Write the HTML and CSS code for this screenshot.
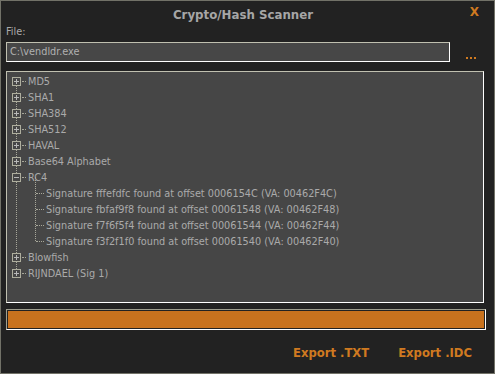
FILE: index.html
```html
<!DOCTYPE html>
<html>
    <head>
        <title>Crypto/Hash Scanner</title>
        <meta charset="UTF-8">
        <link rel="stylesheet" href="styles.css">
    </head>
    <body>
        <div class="window">
            <div class="titlebar">
                <span class="title">Crypto/Hash Scanner</span>
                <span class="close">X</span>
            </div>
            <div class="label">File:</div>
            <div class="filerow">
                <div class="filebox">C:\vendldr.exe</div>
                <div class="browse"><i></i><i></i><i></i></div>
            </div>
            <div class="tree">
                <ul class="root">
                    <li><span class="tog plus"></span><span class="dash"></span>MD5</li>
                    <li><span class="tog plus"></span><span class="dash"></span>SHA1</li>
                    <li><span class="tog plus"></span><span class="dash"></span>SHA384</li>
                    <li><span class="tog plus"></span><span class="dash"></span>SHA512</li>
                    <li><span class="tog plus"></span><span class="dash"></span>HAVAL</li>
                    <li><span class="tog plus"></span><span class="dash"></span>Base64 Alphabet</li>
                    <li><span class="tog"></span><span class="dash"></span>RC4</li>
                    <li class="kids">
                        <ul>
                            <li><span class="dash long"></span>Signature fffefdfc found at offset 0006154C (VA: 00462F4C)</li>
                            <li><span class="dash long"></span>Signature fbfaf9f8 found at offset 00061548 (VA: 00462F48)</li>
                            <li><span class="dash long"></span>Signature f7f6f5f4 found at offset 00061544 (VA: 00462F44)</li>
                            <li><span class="dash long"></span>Signature f3f2f1f0 found at offset 00061540 (VA: 00462F40)</li>
                        </ul>
                    </li>
                    <li><span class="tog plus"></span><span class="dash"></span>Blowfish</li>
                    <li><span class="tog plus"></span><span class="dash"></span>RIJNDAEL (Sig 1)</li>
                </ul>
            </div>
            <div class="progress"><div class="bar"></div></div>
            <div class="actions">
                <span class="action">Export .TXT</span>
                <span class="action">Export .IDC</span>
            </div>
        </div>
    </body>
</html>
```

FILE: styles.css
```css
html,body{margin:0; padding:0; background:#222222;}

.window{
    width:495px; height:374px;
    box-sizing:border-box;
    border:1px solid #727268;
    background:#222222;
    font-family:"DejaVu Sans Condensed", "DejaVu Sans", sans-serif;
    font-size:10.8px;
    color:#aaaaaa;
    padding:0 5px 0 5px;
}

.titlebar{
    position:relative;
    height:24px;
    display:flex;
    justify-content:center;
    align-items:center;
}

.title{
    font-family:"DejaVu Sans", sans-serif;
    font-weight:bold;
    font-size:11.8px;
    color:#a6a6a6;
    margin:3px 9px 0 0;
}

.close{
    position:absolute;
    right:10px; top:4px;
    color:#d07a20;
    font-family:"DejaVu Sans", sans-serif;
    font-weight:bold;
    font-size:12px;
}

.label{height:16px; line-height:14px; padding-left:0;}

.filerow{display:flex; align-items:center; margin-top:1px;}

.filebox{
    width:444px; height:20px;
    box-sizing:border-box;
    border:1px solid #fff;
    border-top-color:#c0c0b0;
    border-left-color:#c0c0b0;
    background:#474747;
    color:#b0b0b0;
    line-height:18px;
    padding-left:3px;
}

.browse{display:flex; gap:2px; margin:12px 0 0 16px;}
.browse i{display:block; width:2px; height:2px; background:#d07a20;}

.tree{
    margin-top:9px;
    width:478px; height:232px;
    box-sizing:border-box;
    border:1px solid #fff;
    border-top-color:#c0c0b0;
    border-left-color:#c0c0b0;
    background:#464646;
    padding:1px 0 0 4px;
}

ul{list-style:none; margin:0; padding:0;}

.root{position:relative;}

.root::before{
    content:"";
    position:absolute;
    left:5px; top:8px; bottom:8px;
    border-left:1px dotted #a8a89a;
}

li{
    position:relative;
    display:flex;
    align-items:center;
    height:16px;
    white-space:nowrap;
    color:#aaaaaa;
}

li.kids{display:block; height:auto;}

.kids ul{position:relative; margin-left:19px;}

.kids ul::before{
    content:"";
    position:absolute;
    left:5px; top:-8px; bottom:8px;
    border-left:1px dotted #a8a89a;
}

.tog{
    position:relative;
    z-index:1;
    width:9px; height:9px;
    box-sizing:border-box;
    border:1px solid #aeae9e;
    background:#464646;
    margin-left:1px;
}

.tog::before{
    content:"";
    position:absolute;
    left:1px; top:3px;
    width:5px; height:1px;
    background:#b8b8b8;
}

.tog.plus::after{
    content:"";
    position:absolute;
    left:3px; top:1px;
    width:1px; height:5px;
    background:#b8b8b8;
}

.dash{
    width:4px; height:0;
    border-top:1px dotted #a8a89a;
    margin:0 2px 0 1px;
}

.dash.long{width:8px; margin:0 2px 0 6px;}

.progress{
    margin-top:6px;
    width:480px; height:21px;
    box-sizing:border-box;
    border:1px solid #fff;
    border-top-color:#a0a090;
    border-left-color:#a0a090;
    padding:1px;
}

.bar{height:100%; background:#c8721e;}

.actions{
    display:flex;
    justify-content:flex-end;
    gap:29px;
    padding:16px 17px 0 0;
}

.action{
    color:#d07a20;
    font-family:"DejaVu Sans", sans-serif;
    font-weight:bold;
    font-size:11.6px;
}
```
